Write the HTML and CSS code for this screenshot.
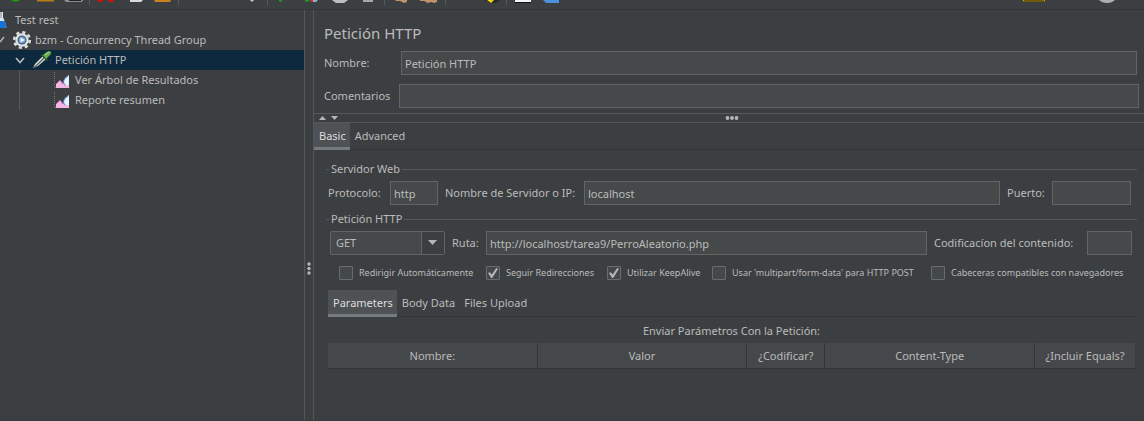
FILE: index.html
```html
<!DOCTYPE html>
<html lang="es">
<head>
<meta charset="utf-8">
<title>Petición HTTP</title>
<link rel="stylesheet" href="styles.css">
</head>
<body>
<div class="app">
  <header class="toolbar">
    <svg width="600" height="9" viewBox="0 0 600 9" aria-hidden="true">
      <path d="M11 0h9l-3 1.5h-3z" fill="#15a800"/>
      <path d="M37 0h17v1.5H37z" fill="#b87d16"/>
      <path d="M64 0h19v1l-2 1H66z" fill="#8b8b8b"/><path d="M69 0h12v1H69z" fill="#222"/>
      <path d="M97 0h6l-1 2h-4zM108 0h6l-1 2h-4z" fill="#c91212"/>
      <path d="M130 0h13l-2 2h-11z" fill="#dadada"/>
      <path d="M154 0h17l-1 2h-15z" fill="#c9801d"/>
      <path d="M250 0h4l-2 2z" fill="#c8c8c8"/>
      <path d="M279 0h3v1.5h-3z" fill="#1f9e1f"/>
      <path d="M305 0h4v1.5h-4z" fill="#1f9e1f"/><path d="M310 0h3v2h-3z" fill="#b33"/><path d="M313 0h5l-2 2h-3z" fill="#8ab4d8"/>
      <path d="M332 0h16l-4 3h-8z" fill="#bdbdbd"/>
      <path d="M363 0h10v2h-10z" fill="#a9a9a9"/>
      <path d="M395 0h12v2l-3 1-4-2h-4z" fill="#c09565"/>
      <path d="M420 0h17v2l-3 1-3-1-3 1-4-2h-4z" fill="#c09565"/>
      <path d="M485 0h15l-4 3h-6z" fill="#292b20"/><path d="M487 0h7l-3 3z" fill="#f1d61a"/>
      <path d="M515 0h16v2h-16z" fill="#f5f5f5"/><path d="M515 2.500h16" stroke="#111"/>
      <path d="M543 0h16v3h-13z" fill="#4d8fdc"/>
      <path d="M89.500 0v5M178.500 0v5M267.500 0v5M384.500 0v5M445.500 0v5M506.500 0v5" stroke="#55595b"/>
    </svg>
    <svg width="122" height="9" viewBox="0 0 122 9" aria-hidden="true">
      <path d="M1 0h22v2H1z" fill="#6f5a0c"/><path d="M1 0h1v1H1zM22 0h1v1h-1z" fill="#d8ae10"/>
      <path d="M77 0h16q-3 3-8 3t-8-3z" fill="#aeaeae"/>
    </svg>
  </header>
  <div class="workspace">
    <nav class="tree" aria-label="Plan de pruebas">
      <ul>
        <li class="node level-0">
          <svg width="8" height="18" viewBox="0 0 8 18"><path d="M0 1h3v5l3 8q1 3-1 3H0z" fill="#dce6ee"/><path d="M0 10h4.500l2 5q0 2-2 2H0z" fill="#1872d4"/><path d="M1 1v6" stroke="#7d8b98"/></svg>
          <span>Test rest</span></li>
        <li class="node level-1">
          <svg width="6" height="20" viewBox="0 0 6 20"><path d="M0 12l4-5" stroke="#b2b4b5" stroke-width="1.500" fill="none"/></svg>
          <svg class="icon" width="20" height="20" viewBox="0 0 20 20"><circle cx="10" cy="10" r="7.800" fill="none" stroke="#dedede" stroke-width="2.600" stroke-dasharray="3.200 2.926"/><circle cx="10" cy="10" r="6.700" fill="#e4e4e4"/><circle cx="10" cy="10" r="4.500" fill="#33577f"/><circle cx="10" cy="10" r="3.500" fill="#6f9bc7"/><path d="M8.500 7.500l4.500 2.500-4.500 2.500z" fill="#f0f6fc"/></svg>
          <span>bzm - Concurrency Thread Group</span></li>
        <li class="node level-2 selected">
          <svg width="10" height="20" viewBox="0 0 10 20"><path d="M1 8l4 4.500L9 8" stroke="#b5bbc0" stroke-width="1.600" fill="none"/></svg>
          <svg class="icon" width="20" height="20" viewBox="0 0 20 20"><path d="M1 18l2-4 8-8 3 3-8 7z" fill="#dfe2e0"/><path d="M1 18l3-2 8-8" stroke="#555b58" stroke-width="1.300" fill="none"/><path d="M9.500 4.500l6 6" stroke="#2b5326" stroke-width="1.800"/><path d="M11 5l3-2.500q3-2.500 4.500-1T18 5l-4 4z" fill="#69ab50"/><path d="M13 5l4-3" stroke="#a9d88e"/></svg>
          <span>Petición HTTP</span></li>
        <li class="node level-3">
          <svg width="16" height="20" viewBox="0 0 16 20"><path d="M.500 2v15.500h15" stroke="#74777a" stroke-dasharray="1 1" fill="none"/><path d="M2 18v-4l4-4 3 3 2-1 4 3v3z" fill="#f3b5e4"/><path d="M2 14l4-4 3 4" stroke="#a55497" fill="none"/><path d="M15 5v10q-3 1-5-1-2-5 5-9z" fill="#e4f2fc"/><path d="M14 6q-4 2-4.500 5t2 4" stroke="#4976b8" fill="none"/></svg>
          <span>Ver Árbol de Resultados</span></li>
        <li class="node level-3">
          <svg width="16" height="20" viewBox="0 0 16 20"><path d="M.500 2v15.500h15" stroke="#74777a" stroke-dasharray="1 1" fill="none"/><path d="M2 18v-4l4-4 3 3 2-1 4 3v3z" fill="#f3b5e4"/><path d="M2 14l4-4 3 4" stroke="#a55497" fill="none"/><path d="M15 5v10q-3 1-5-1-2-5 5-9z" fill="#e4f2fc"/><path d="M14 6q-4 2-4.500 5t2 4" stroke="#4976b8" fill="none"/></svg>
          <span>Reporte resumen</span></li>
      </ul>
    </nav>
    <div class="splitter" role="separator" aria-orientation="vertical">
      <svg width="4" height="14" viewBox="0 0 4 14" fill="#b4b6b7"><circle cx="2" cy="2" r="1.700"/><circle cx="2" cy="6.500" r="1.700"/><circle cx="2" cy="11" r="1.700"/></svg>
    </div>
    <main class="editor">
      <section class="identity">
        <h1>Petición HTTP</h1>
        <div class="identity-row name-row"><label for="name">Nombre:</label><input id="name" type="text" value="Petición HTTP"></div>
        <div class="identity-row comment-row"><label for="comments">Comentarios</label><input id="comments" type="text"></div>
      </section>
      <div class="divider" role="separator">
        <svg width="20" height="6" viewBox="0 0 20 6" fill="#b4b6b7"><path d="M0 5l3.500-4L7 5zM12 1h7l-3.500 4z"/></svg>
        <svg width="14" height="6" viewBox="0 0 14 6" fill="#b4b6b7"><circle cx="2.500" cy="3" r="1.900"/><circle cx="7" cy="3" r="1.900"/><circle cx="11.500" cy="3" r="1.900"/></svg>
      </div>
      <div class="tabs" role="tablist">
        <button class="tab active" role="tab" aria-selected="true">Basic</button>
        <button class="tab" role="tab" aria-selected="false">Advanced</button>
      </div>
      <div class="form">
        <section class="group">
          <h2>Servidor Web</h2>
          <div class="fields server">
            <label for="protocol">Protocolo:</label><input id="protocol" type="text" value="http">
            <label for="host">Nombre de Servidor o IP:</label><input id="host" type="text" value="localhost">
            <label for="port">Puerto:</label><input id="port" type="text">
          </div>
        </section>
        <section class="group">
          <h2>Petición HTTP</h2>
          <div class="fields request">
            <div class="combo">
              <select aria-label="Método"><option>GET</option></select>
              <span class="combo-arrow"><svg width="10" height="6" viewBox="0 0 10 6"><path d="M0 0h9L4.500 5z" fill="#b4b6b7"/></svg></span>
            </div>
            <label for="path">Ruta:</label><input id="path" type="text" value="http://localhost/tarea9/PerroAleatorio.php">
            <label for="encoding">Codificacíon del contenido:</label><input id="encoding" type="text">
          </div>
          <div class="checks">
            <label><input type="checkbox">Redirigir Automáticamente</label>
            <label><input type="checkbox" checked>Seguir Redirecciones</label>
            <label><input type="checkbox" checked>Utilizar KeepAlive</label>
            <label><input type="checkbox">Usar 'multipart/form-data' para HTTP POST</label>
            <label><input type="checkbox">Cabeceras compatibles con navegadores</label>
          </div>
        </section>
        <section class="payload">
          <div class="tabs" role="tablist">
            <button class="tab active" role="tab" aria-selected="true">Parameters</button>
            <button class="tab" role="tab" aria-selected="false">Body Data</button>
            <button class="tab" role="tab" aria-selected="false">Files Upload</button>
          </div>
          <table>
            <caption>Enviar Parámetros Con la Petición:</caption>
            <colgroup><col><col><col class="code"><col><col class="equals"></colgroup>
            <thead><tr><th>Nombre:</th><th>Valor</th><th>¿Codificar?</th><th>Content-Type</th><th>¿Incluir Equals?</th></tr></thead>
          </table>
        </section>
      </div>
    </main>
  </div>
</div>
</body>
</html>
```
FILE: styles.css
```css
* { box-sizing: border-box; }
body {
  margin: 0;
  background: #3c3f41;
  color: #bbbbbb;
  font: 11px/20px "Noto Sans", "Open Sans", sans-serif;
}
h1, h2, ul { margin: 0; padding: 0; font-weight: 400; }
svg { display: block; flex: none; }
input, select, button { font: inherit; color: inherit; margin: 0; border-radius: 0; }
label { white-space: nowrap; }

.app { display: flex; flex-direction: column; min-height: 100vh; border-bottom: 1px solid #36393b; }
.toolbar { display: flex; justify-content: space-between; border-bottom: 1px solid #323537; overflow: hidden; }
.workspace { display: flex; flex: 1; }

.tree { flex: 0 0 304px; }
.tree ul { list-style: none; }
.node { display: flex; align-items: center; height: 20px; line-height: 22px; white-space: nowrap; }
.level-0 { gap: 7px; }
.level-1 { gap: 3px; }
.level-1 .icon { margin-left: 3px; }
.level-2 { padding-left: 15px; gap: 3px; }
.level-2 .icon { margin-left: 4px; }
.level-3 { margin-left: 19px; padding-left: 34px; gap: 5px; border-left: 1px solid #56595b; }
.selected { background: #0d293e; }

.splitter {
  display: flex; align-items: center; justify-content: center;
  flex: 0 0 10px; padding-top: 108px;
  border: solid #555759; border-width: 0 1px;
}

.editor { flex: 1; min-width: 0; }
input[type="text"] {
  min-width: 0; width: 100%; height: 24px; padding: 0 3px;
  background: #45494a; border: 1px solid #646464;
}
.identity { padding: 10px 5px 5px 10px; }
h1 { font-size: 15px; line-height: 26px; }
.identity-row { display: grid; align-items: center; }
.name-row { grid-template-columns: 77px 1fr; margin: 5px 2px 9px 0; }
.comment-row { grid-template-columns: 75px 1fr; }

.divider {
  display: grid; grid-template-columns: 1fr auto 1fr; align-items: center;
  height: 10px; padding: 0 0 0 5px;
  border: solid #555759; border-width: 1px 0;
}
.tabs { display: flex; box-shadow: inset 0 -1px #323537; }
.tab {
  height: 27px; padding: 2px 4px 0 5px; border: 0; border-bottom: 3px solid transparent;
  background: none; white-space: nowrap;
}
.tab.active { background: #4e5254; border-bottom-color: #747a80; color: #dddddd; }

.form { padding: 9px 7px 0 12px; }
h2 { display: flex; align-items: center; gap: 2px; font-size: 11px; line-height: 20px; }
h2::before, h2::after { content: ""; height: 1px; background: #555759; }
h2::before { width: 3px; }
h2::after { flex: 1; }
.fields { display: grid; align-items: center; margin-top: 2px; padding: 0 5px 0 2px; }
.server { grid-template-columns: 55px 48px 132px 1fr 38px 79px; column-gap: 7px; margin-bottom: 4px; padding-right: 6px; }
.request { grid-template-columns: 115px 27px 1fr 146px 45px; column-gap: 7px; padding-left: 4px; }
.combo { position: relative; }
.combo select {
  appearance: none; display: block; width: 100%; height: 24px; padding: 0 26px 0 5px;
  background: #45494a; border: 1px solid #646464; border-radius: 2px;
}
.combo-arrow {
  position: absolute; top: 1px; right: 1px; bottom: 1px; width: 23px;
  display: flex; align-items: center; justify-content: center;
  border-left: 1px solid #646464; background: #3c3f41; pointer-events: none;
}

.checks {
  display: grid; grid-template-columns: 147fr 121fr 105fr 219fr 200fr;
  padding: 8px 6px 7px 13px; font-size: 9px;
}
.checks label { display: flex; align-items: center; gap: 6px; }
.checks input {
  appearance: none; width: 14px; height: 14px; flex: none;
  background: #43494a; border: 1px solid #6b6b6b; border-radius: 1px;
}
.checks input:checked::before {
  content: ""; display: block; width: 10px; height: 10px; margin: 1px;
  background: #b4b6b7;
  clip-path: polygon(0 50%, 18% 42%, 38% 66%, 82% 0, 100% 8%, 42% 100%, 32% 100%);
}

.payload { padding: 0 2px; }
table { width: 100%; table-layout: fixed; border-collapse: separate; border-spacing: 0; }
caption { height: 26px; line-height: 28px; }
.code { width: 78px; }
.equals { width: 100px; }
th {
  height: 26px; padding: 0; font-weight: 400; white-space: nowrap;
  background: #45484a; border: solid #323537; border-width: 0 1px 1px 0;
}
th:last-child { border-right: 0; }
```
